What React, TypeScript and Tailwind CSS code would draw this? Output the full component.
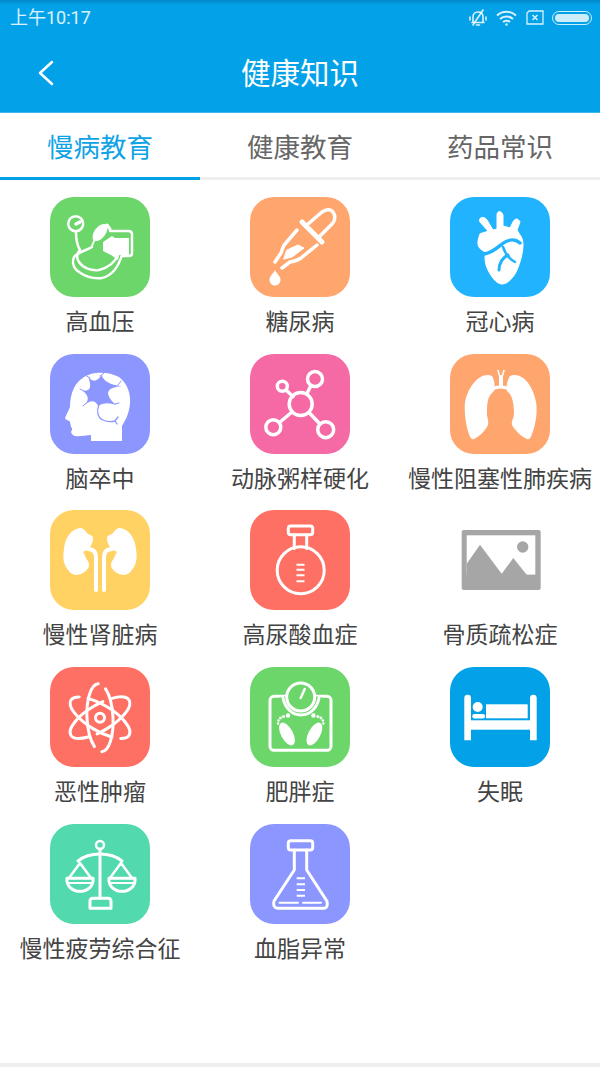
import type { ReactNode } from "react";

const FONT = "font-['Noto_Sans_CJK_SC','Noto_Sans',sans-serif]";

// all tile icons are drawn on a 100x100 canvas, the size of the tile
function Glyph({ children }: { children: ReactNode }) {
  return (
    <svg
      viewBox="0 0 100 100"
      className="h-full w-full"
      fill="none"
      stroke="#fff"
      strokeWidth={3}
      strokeLinecap="round"
      strokeLinejoin="round"
    >
      {children}
    </svg>
  );
}

const Stethoscope = () => (
  <Glyph>
    <circle cx="25.700" cy="26.700" r="7.500" strokeWidth={2.500} />
    <path d="M26 27l4-2" strokeWidth={3.500} />
    <path d="M26 35c0 8 1 13 4 18" strokeWidth={2.500} />
    <path d="M42 50c-7 4-14 5-18 10-2 5-1 11 5 15 7 5 15 7 23 6 9-2 16-10 20-23" strokeWidth={2.500} />
    <path d="M30 53c-3 3-4 8-1 12 4 6 12 9 20 8 8-2 15-6 19-15" strokeWidth={2.500} />
    <ellipse cx="50" cy="35.500" rx="10" ry="5.500" transform="rotate(-52 50 35.500)" fill="#fff" stroke="none" />
    <path d="M44 44l-2 5" strokeWidth={2} />
    <path d="M57 28l3 4" strokeWidth={3} />
    <path d="M60 34h18c3 0 4 1 4 3v19c0 2-1 3-3 3h-6" strokeWidth={2.500} />
    <path d="M53 45l9-6 3 2h14v17H69l-1 5-7-5-8-4z" fill="#fff" stroke="none" />
  </Glyph>
);

const Dropper = () => (
  <Glyph>
    <path d="M58 27l14-12c4-3 9-3 11 0 3 4 2 9-1 12L69 40" strokeWidth={3.500} />
    <path d="M52 25l20 20" strokeWidth={5} />
    <path d="M47 33L35 47c-3 3-2 5-4 9l-6 9" strokeWidth={3.500} />
    <path d="M67 48L51 61c-4 3-7 3-11 4l-8 6" strokeWidth={3.500} />
    <path d="M37 53l11-5 6 3-12 9-8 2z" fill="#fff" strokeWidth={1} />
    <path d="M25 73c-2 4-5.500 6-5.500 10a5.500 5.500 0 0 0 11 0c0-4-3.500-6-5.500-10z" fill="#fff" stroke="none" />
  </Glyph>
);

const Heart = () => (
  <Glyph>
    <path
      d="M30 37c-2 5-3 10-1 13 2 3 4 4 7 5l-1 5c0 5 1 9 3 13 3 6 8 14 14 14s12-7 15-14c3-7 6-17 6-25 0-4-1-8-3-10l-3-5 3-8c-2-4-5-4-7 0l-3 6-3-1-4-1V18c-2-5-6-4-6 0v14l-4 1-6-10c-4-5-9-2-7 2l8 9z"
      fill="#fff"
      stroke="#fff"
      strokeWidth={1}
    />
    <path d="M34 57c8-1 13-6 18-10 5-4 12-6 18-1" stroke="#22b3ff" strokeWidth={3.500} />
    <path d="M53 50c2 6 6 12 12 15" stroke="#22b3ff" strokeWidth={2.500} />
    <path d="M58 58c-5 2-9 8-9 15" stroke="#22b3ff" strokeWidth={3} />
  </Glyph>
);

const Brain = () => (
  <Glyph>
    <path
      d="M72 87V72c3-5 7-12 8-22 1-11-3-21-11-27-7-4-16-5-23-4-10 1-18 7-22 15-3 6-4 12-4 19l-5 11c1 3 5 2 5 4l1 5c2 2 1 3 0 5 1 4 5 5 9 4 4 0 9-1 11-1v6z"
      fill="#fff"
      stroke="none"
    />
    <path
      d="M38.300 23.300Q45 31 51.700 21Q54 30 71.700 32.300Q58 33 58 40Q60 47 66.700 51Q55 47 48 51.700Q44 43 34.300 51Q42 44 32.700 36.700Q44 38 38.300 23.300Z"
      fill="#8c96ff"
      stroke="none"
    />
    <path d="M49 51c-3 6-1 13 4 15 4 2 8 2 12 1l2 3M65 67l3-4" stroke="#8c96ff" strokeWidth={1.300} />
    <path d="M40 24l-5-3M50 22l4-3M68 31l3-4M34 37l-4-2M36 49l-3 3M65 50l4-1" stroke="#8c96ff" strokeWidth={1} />
  </Glyph>
);

const Network = () => (
  <Glyph>
    <g strokeWidth={3.500}>
      <circle cx="50.700" cy="50" r="11.500" />
      <circle cx="65" cy="25" r="7.500" />
      <circle cx="32.300" cy="32.300" r="5" />
      <circle cx="23.300" cy="73.300" r="7.500" />
      <circle cx="75.700" cy="75.700" r="8" />
      <path d="M57 39.500l4-8M36 36l7 6.500M42 58L29.500 68.500M59 58.500l11 11.500" />
    </g>
  </Glyph>
);

const Lungs = () => (
  <Glyph>
    <path
      d="M42 22c-4-2-9-1-13 2-7 5-12 14-14 24-1 11 1 24 4 32 1 4 3 6 5 5 6-3 11-8 14-14 1-4-1-7-1-11 0-8 0-15 4-20l3-3c1-5 1-10-2-15zM60 22c4-2 9-1 13 2 7 5 11 14 13 24 2 11-1 24-4 32-1 4-3 6-5 5-7-3-12-9-15-14-1-4 2-7 2-11 0-8-1-15-4-20l-3-3c-1-5 0-10 3-15z"
      fill="#fff"
      stroke="none"
    />
    <path d="M49 21h4v12h-4z" fill="#fff" stroke="none" />
    <path d="M48 16.500l1.500 5M54 16.500l-1.500 5" strokeWidth={1.500} />
    <path d="M41 36c5-4 14-4 20 0" strokeWidth={3} />
  </Glyph>
);

const Kidneys = () => (
  <Glyph>
    <path d="M30 18c-9 1-15 10-16 21-1 7-1 13 2 18 3 5 6 8 11 8 6-1 12-5 12-10 0-4-4-7-4-10l-2-3 4-2c4-3 6-8 6-12 0-3-4-3-6-5-2-3-4-5-7-5z" fill="#fff" stroke="none" />
    <path d="M70 18c9 1 15 10 16 21 1 7 1 13-2 18-3 5-6 8-11 8-6-1-12-5-12-10 0-4 4-7 4-10l2-3-4-2c-4-3-6-8-6-12 0-3 4-3 6-5 2-3 4-5 7-5z" fill="#fff" stroke="none" />
    <path d="M38 39c5 0 8 3 8 9v32M62 39c-5 0-8 3-8 9v32" strokeWidth={4} />
  </Glyph>
);

const Flask = () => (
  <Glyph>
    <rect x="38.300" y="16" width="24.400" height="8.700" rx="2.500" />
    <path d="M44.300 25v13.500M56.700 25v13.500" />
    <circle cx="50.700" cy="60.300" r="23.500" />
    <path d="M46.500 54.700h8M46.500 59.700h8M46.500 65.300h8M46.500 71.300h8" strokeWidth={2} strokeLinecap="butt" />
  </Glyph>
);

const Placeholder = () => (
  <Glyph>
    <rect x="11.700" y="20" width="79" height="60" rx="2" fill="#a6a6a6" stroke="none" />
    <rect x="16.700" y="25.300" width="68.600" height="39.500" fill="#fff" stroke="none" />
    <path d="M16.700 53.700L30 34.700l21.700 29 11.600-15.700 13.400 16.700h8.600V70H16.700z" fill="#a6a6a6" stroke="none" />
    <circle cx="72.700" cy="37" r="5.700" fill="#a6a6a6" stroke="none" />
  </Glyph>
);

const Atom = () => (
  <Glyph>
    <g strokeWidth={3}>
      <ellipse cx="50" cy="50.700" rx="34" ry="13" transform="rotate(31 50 50.700)" pathLength={100} strokeDasharray="44 6" strokeDashoffset={-12} />
      <ellipse cx="50" cy="50.700" rx="34" ry="13" transform="rotate(-31 50 50.700)" pathLength={100} strokeDasharray="44 6" strokeDashoffset={-38} />
      <ellipse cx="50" cy="50.700" rx="34" ry="13" transform="rotate(87 50 50.700)" pathLength={100} strokeDasharray="44 6" strokeDashoffset={-6} />
      <circle cx="50" cy="50.700" r="4.500" />
    </g>
  </Glyph>
);

const Scale = () => (
  <Glyph>
    <rect x="20" y="29.300" width="61" height="54" rx="4" />
    <path d="M32.500 30c2 11 10 18 18.500 18s16-7 18-18" stroke="#6cd66b" strokeWidth={7} strokeLinecap="butt" />
    <path d="M33 31c2 10 9 17 18 17s16-7 18-17" />
    <circle cx="50.700" cy="30" r="14" fill="#6cd66b" />
    <path d="M50.700 31l4-9" strokeWidth={2.500} />
    <g fill="#fff" stroke="none">
      <ellipse cx="37" cy="67" rx="6" ry="12.500" transform="rotate(-28 37 67)" />
      <ellipse cx="64.400" cy="67" rx="6" ry="12.500" transform="rotate(28 64.400 67)" />
      <circle cx="38" cy="48.500" r="2.200" />
      <circle cx="33.500" cy="49.500" r="1.500" />
      <circle cx="30.500" cy="51" r="1.400" />
      <circle cx="28.500" cy="53.500" r="1.300" />
      <circle cx="28" cy="56.500" r="1.200" />
      <circle cx="63.400" cy="48.500" r="2.200" />
      <circle cx="67.900" cy="49.500" r="1.500" />
      <circle cx="70.900" cy="51" r="1.400" />
      <circle cx="72.900" cy="53.500" r="1.300" />
      <circle cx="73.400" cy="56.500" r="1.200" />
    </g>
  </Glyph>
);

const Bed = () => (
  <Glyph>
    <g fill="#fff" stroke="none">
      <path d="M14.300 31a3.300 3.300 0 0 1 6.700 0v42.300h-6.700zM80 31a3.300 3.300 0 0 1 6.700 0v42.300H80z" />
      <rect x="21" y="53.300" width="59" height="9.400" />
      <rect x="36" y="37.300" width="41.700" height="14" />
      <circle cx="27.700" cy="40" r="5" />
      <rect x="22.300" y="47" width="12.700" height="4.500" rx="2" />
    </g>
  </Glyph>
);

const Balance = () => (
  <Glyph>
    <circle cx="50" cy="21" r="4" strokeWidth={2.500} />
    <path d="M50 25v49" />
    <path d="M28 37c6-5 15-7 22-7s16 2 22 7" />
    <path d="M30 39L19 54M30 39l11 15M71 39L60 54M71 39l11 15" strokeWidth={2.500} />
    <path d="M17 54.300h26c1 8-6 13-13 13s-14-5-13-13zM59 54.300h26c1 8-6 13-13 13s-14-5-13-13z" />
    <path d="M19 59h22M61 59h22" strokeWidth={2} />
    <path d="M40 84.300v-7c0-2 1-3 3-3h15c2 0 3 1 3 3v7z" />
  </Glyph>
);

const Beaker = () => (
  <Glyph>
    <rect x="38.300" y="16.700" width="24.400" height="9.300" rx="2.500" />
    <path d="M44.300 26v20L24 77c-1 4 0 7 4 7.300h45c4 0 5-3 4-7L56.700 46V26" />
    <path d="M29.500 78.700H48M53 78.700h18" strokeWidth={2} />
    <path d="M46.700 54.300H55M46.700 60.300H55M46.700 66H55M46.700 71.700H55" strokeWidth={2} strokeLinecap="butt" />
  </Glyph>
);

const ITEMS = [
  { label: "高血压", bg: "bg-[#6cd66b]", Icon: Stethoscope },
  { label: "糖尿病", bg: "bg-[#ffa66f]", Icon: Dropper },
  { label: "冠心病", bg: "bg-[#22b3ff]", Icon: Heart },
  { label: "脑卒中", bg: "bg-[#8c96ff]", Icon: Brain },
  { label: "动脉粥样硬化", bg: "bg-[#f569a4]", Icon: Network },
  { label: "慢性阻塞性肺疾病", bg: "bg-[#ffa66f]", Icon: Lungs },
  { label: "慢性肾脏病", bg: "bg-[#ffd263]", Icon: Kidneys },
  { label: "高尿酸血症", bg: "bg-[#ff7064]", Icon: Flask },
  { label: "骨质疏松症", bg: "bg-white", Icon: Placeholder },
  { label: "恶性肿瘤", bg: "bg-[#ff7064]", Icon: Atom },
  { label: "肥胖症", bg: "bg-[#6cd66b]", Icon: Scale },
  { label: "失眠", bg: "bg-[#03a2e8]", Icon: Bed },
  { label: "慢性疲劳综合征", bg: "bg-[#52d9ae]", Icon: Balance },
  { label: "血脂异常", bg: "bg-[#8c96ff]", Icon: Beaker },
];

const TABS = ["慢病教育", "健康教育", "药品常识"];

function StatusIcons() {
  return (
    <div className="flex items-center text-white/85">
      <svg viewBox="0 0 20 18" className="mr-[8px] h-[18px] w-[20px]" fill="none" stroke="currentColor" strokeWidth={1.600} strokeLinecap="round">
        <path d="M5 13V8c0-3 2-5 5-5s5 2 5 5v5" />
        <path d="M4 13.500h12M8.500 16h3" />
        <path d="M2 8v3M18 8v3M15 1L5 16" />
      </svg>
      <svg viewBox="0 0 21 16" className="mr-[9px] h-[16px] w-[21px]" fill="none" stroke="currentColor" strokeWidth={2}>
        <path d="M1 5.500c5.500-5 13.500-5 19 0M4 9c3.800-3.300 9.200-3.300 13 0M7 12c2-1.500 5-1.500 7 0" />
        <circle cx="10.500" cy="14.500" r="1.200" fill="currentColor" stroke="none" />
      </svg>
      <svg viewBox="0 0 18 15" className="mr-[8px] h-[15px] w-[18px]" fill="none" stroke="currentColor" strokeWidth={1.300}>
        <path d="M3 1h14v13H1V3z" />
        <path d="M6.500 5l5 5M11.500 5l-5 5" strokeWidth={1.500} />
      </svg>
      <div className="flex h-[14px] w-[40px] items-center rounded-full border border-white/80 p-[2px]">
        <div className="h-full w-full rounded-full bg-white/80" />
      </div>
    </div>
  );
}

export default function App() {
  return (
    <div className={`flex h-[1067px] w-[600px] flex-col overflow-hidden bg-white ${FONT}`}>
      <header className="flex h-[113px] shrink-0 flex-col border-b border-[#3ab8f0] bg-[#03a2e8]">
        <div className="flex h-[33px] items-center justify-between bg-[linear-gradient(#0288c9,#03a2e8_5px)] pl-[10px] pr-[8px] pt-[2px]">
          <span className="font-['Roboto','Noto_Sans_CJK_SC',sans-serif] text-[18px] leading-none text-white/85">上午10:17</span>
          <StatusIcons />
        </div>
        <div className="relative flex flex-1 items-center justify-center pb-[1px]">
          <button aria-label="返回" className="absolute left-[38px] top-[27px]">
            <svg viewBox="0 0 16 26" className="h-[26px] w-[16px]" fill="none" stroke="#fff" strokeWidth={2.500} strokeLinecap="round" strokeLinejoin="round">
              <path d="M14 2L2 13l12 11" />
            </svg>
          </button>
          <h1 className="text-[29.500px] font-normal leading-none text-white">健康知识</h1>
        </div>
      </header>

      <nav className="flex h-[67px] shrink-0">
        {TABS.map((tab, i) => (
          <div
            key={tab}
            className={`flex flex-1 items-center justify-center border-b-[3px] pt-[3px] text-[26.500px] leading-none ${
              i === 0 ? "border-[#03a2e8] text-[#0fa3e6]" : "border-[#eeeeee] text-[#666666]"
            }`}
          >
            {tab}
          </div>
        ))}
      </nav>

      <main className="grid flex-1 auto-rows-[156.67px] grid-cols-3 pt-[17px]">
        {ITEMS.map(({ label, bg, Icon }) => (
          <div key={label} className="flex flex-col items-center">
            <div className={`h-[100px] w-[100px] rounded-[24px] ${bg}`}>
              <Icon />
            </div>
            <span className="mt-[8px] whitespace-nowrap text-[23px] leading-[30px] text-[#444444]">{label}</span>
          </div>
        ))}
      </main>

      <div className="h-[4px] shrink-0 bg-[#eeeeee]" />
    </div>
  );
}
